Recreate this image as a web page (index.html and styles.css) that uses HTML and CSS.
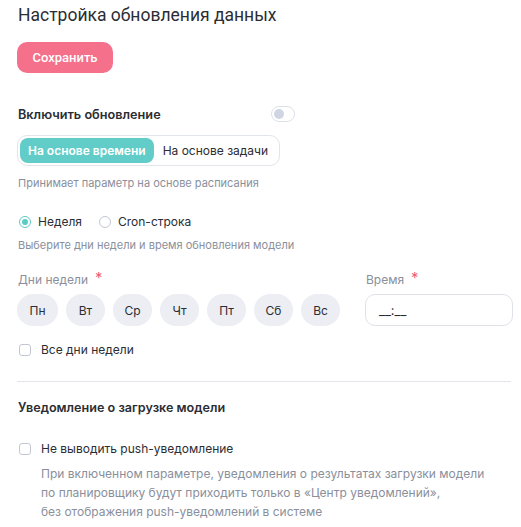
FILE: index.html
```html
<!DOCTYPE html>
<html lang="ru">
<head>
<meta charset="utf-8">
<link rel="stylesheet" href="styles.css">
</head>
<body>
<div class="page">
  <h1 class="title">Настройка обновления данных</h1>
  <button class="btn-save">Сохранить</button>

  <div class="row-toggle">
    <span class="label-bold">Включить обновление</span>
    <span class="toggle"><span class="knob"></span></span>
  </div>

  <div class="segmented">
    <span class="seg active">На основе времени</span>
    <span class="seg">На основе задачи</span>
  </div>
  <div class="hint hint-seg">Принимает параметр на основе расписания</div>

  <div class="radios">
    <label class="radio"><span class="rdot checked"></span>Неделя</label>
    <label class="radio"><span class="rdot"></span>Cron-строка</label>
  </div>
  <div class="hint hint-radio">Выберите дни недели и время обновления модели</div>

  <div class="fields">
    <div class="field-days">
      <div class="field-label">Дни недели<span class="req">*</span></div>
      <div class="days">
        <span class="day wide">Пн</span>
        <span class="day">Вт</span>
        <span class="day">Ср</span>
        <span class="day">Чт</span>
        <span class="day">Пт</span>
        <span class="day">Сб</span>
        <span class="day">Вс</span>
      </div>
    </div>
    <div class="field-time">
      <div class="field-label">Время<span class="req">*</span></div>
      <div class="time-input">__:__</div>
    </div>
  </div>

  <label class="check check-all"><span class="cbox"></span>Все дни недели</label>

  <div class="divider"></div>

  <div class="label-bold section-title">Уведомление о загрузке модели</div>

  <label class="check check-push"><span class="cbox"></span>Не выводить push-уведомление</label>
  <div class="desc">При включенном параметре, уведомления о результатах загрузки модели<br>по планировщику будут приходить только в «Центр уведомлений»,<br>без отображения push-уведомлений в системе</div>
</div>
</body>
</html>
```

FILE: styles.css
```css
* { box-sizing: border-box; }
html, body { margin: 0; padding: 0; background: #fff; }
body {
  font-family: Inter, "Noto Sans", sans-serif;
  color: #2b2d33;
}
.page {
  width: 521px;
  padding: 4px 10px 0 17px;
}
.title {
  font-family: Roboto, "Liberation Sans", sans-serif;
  font-weight: 400;
  font-size: 17.5px;
  line-height: 22px;
  margin: 0 0 0 1px;
  color: #2b2d33;
}
.btn-save {
  display: block;
  margin-top: 16px;
  width: 96px;
  height: 31px;
  border: none;
  border-radius: 10px;
  background: #f5708b;
  color: #fff;
  font-family: Roboto, "Liberation Sans", sans-serif;
  font-weight: 500;
  font-size: 13px;
  padding: 0;
}
.row-toggle {
  margin-top: 32px;
  width: 278px;
  display: flex;
  justify-content: space-between;
  align-items: center;
  height: 18px;
  padding-left: 1px;
}
.label-bold {
  font-weight: 600;
  font-size: 12.7px;
  color: #2b2d33;
}
.toggle {
  width: 24px;
  height: 16px;
  border: 1px solid #dde1ea;
  border-radius: 8px;
  display: flex;
  align-items: center;
  padding-left: 2px;
}
.knob {
  width: 10px;
  height: 10px;
  border-radius: 50%;
  background: #cfd5e2;
}
.segmented {
  margin-top: 12px;
  display: inline-flex;
  align-items: center;
  height: 31px;
  padding: 2px;
  border: 1px solid #e1e4eb;
  border-radius: 10px;
}
.seg {
  height: 25px;
  display: flex;
  align-items: center;
  padding: 0 9px 0 9px;
  font-size: 12px;
  color: #2b2d33;
  border-radius: 8px;
}
.seg.active {
  background: #62cdc8;
  color: #fff;
  font-weight: 600;
  padding: 0 8px;
}
.hint {
  font-size: 11px;
  color: #8a8f9c;
}
.hint-seg { margin-top: 10px; margin-left: 1px; }
.radios {
  margin-top: 24px;
  display: flex;
  gap: 17px;
  padding-left: 2px;
}
.radio {
  display: flex;
  align-items: center;
  font-size: 12px;
  color: #2b2d33;
  gap: 7px;
}
.rdot {
  width: 12px;
  height: 12px;
  border-radius: 50%;
  border: 1px solid #c2c7d2;
  display: flex;
  align-items: center;
  justify-content: center;
}
.rdot.checked { border-color: #5ccbc6; }
.rdot.checked::after {
  content: "";
  width: 6px;
  height: 6px;
  border-radius: 50%;
  background: #5ccbc6;
}
.hint-radio { margin-top: 9px; margin-left: 1px; }
.fields {
  margin-top: 20px;
  display: flex;
  gap: 25px;
}
.field-label {
  font-size: 12px;
  color: #8a8f9c;
  height: 18px;
  margin-left: 1px;
  display: flex;
  align-items: flex-start;
}
.req {
  color: #f0607a;
  font-size: 15px;
  line-height: 14px;
  margin-left: 7px;
  margin-top: -1px;
}
.days {
  margin-top: 4px;
  display: flex;
  gap: 8px;
}
.day {
  height: 32px;
  width: 39px;
  border-radius: 16px;
  background: #eceef4;
  display: flex;
  align-items: center;
  justify-content: center;
  font-size: 12px;
  color: #2b2d33;
}
.day.wide { width: 41px; }
.field-time { flex: 1; }
.time-input {
  margin-top: 4px;
  height: 32px;
  width: 148px;
  border: 1px solid #dfe2e9;
  border-radius: 10px;
  display: flex;
  align-items: center;
  padding-left: 13px;
  font-size: 13px;
  color: #2b2d33;
}
.check {
  display: flex;
  align-items: center;
  gap: 10px;
  font-size: 12px;
  color: #2b2d33;
  padding-left: 2px;
}
.cbox {
  width: 12px;
  height: 12px;
  border: 1px solid #c2c7d2;
  border-radius: 3px;
}
.check-all { margin-top: 16px; }
.divider {
  margin-top: 24px;
  height: 1px;
  background: #e1e4ea;
  width: 494px;
}
.section-title { margin-top: 18px; margin-left: 1px; font-size: 12.6px; }
.check-push { margin-top: 26px; }
.desc {
  margin-top: 8px;
  margin-left: 24px;
  font-size: 12px;
  line-height: 19px;
  color: #8a8f9c;
}
```
